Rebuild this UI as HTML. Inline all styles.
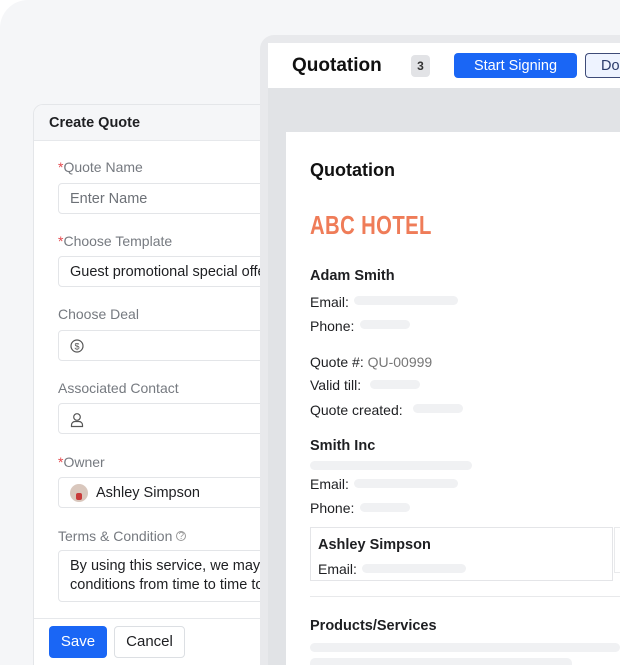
<!DOCTYPE html>
<html><head><meta charset="utf-8"><style>
*{margin:0;padding:0;box-sizing:border-box}
html,body{width:620px;height:665px;overflow:hidden;background:#fff;font-family:"Liberation Sans",sans-serif}
#w{position:relative;width:620px;height:665px;overflow:hidden}
.bg{position:absolute;left:0;top:0;width:620px;height:665px;background:#f5f6f8;border-radius:28px 0 0 0}
.a{position:absolute;white-space:nowrap}
.card{position:absolute;left:33px;top:104px;width:240px;height:561px;background:#fff;border:1px solid #e4e6e9;border-bottom:none;border-radius:10px 10px 0 0;overflow:hidden}
.card .hd{height:36px;background:#f5f6f8;border-bottom:1px solid #e6e8eb}
.lbl{position:absolute;left:24px;font-size:14px;color:#767a80}
.lbl i{color:#e5484d;font-style:normal}
.inp{position:absolute;left:24px;width:240px;height:31px;border:1px solid #e3e5e8;border-radius:4px;font-size:14.5px;color:#1e1f22;padding:7px 11px;white-space:nowrap;overflow:hidden}
.frame{position:absolute;left:260px;top:35px;width:360px;height:630px;background:#e8e9ec;border-radius:14px 0 0 0}
.gray{position:absolute;left:268px;top:43px;width:352px;height:622px;background:#e1e3e6}
.head{position:absolute;left:268px;top:43px;width:352px;height:45px;background:#fff}
.paper{position:absolute;left:286px;top:132px;width:334px;height:533px;background:#fff}
.t{position:absolute;left:310px;font-size:14px;color:#1e1f22;white-space:nowrap}
.bar{position:absolute;height:9px;background:#f0f1f3;border-radius:5px}
</style></head><body><div id="w">
<div class="bg"></div>
<div class="card"><div class="hd"></div>
<div class="a" style="left:15px;top:10px;font-size:14.5px;font-weight:bold;color:#1e1f22">Create Quote</div>
<div class="lbl" style="top:54px"><i>*</i>Quote Name</div>
<div class="inp" style="top:78px;color:#6d7177">Enter Name</div>
<div class="lbl" style="top:128px"><i>*</i>Choose Template</div>
<div class="inp" style="top:151px">Guest promotional special offer</div>
<div class="lbl" style="top:201px">Choose Deal</div>
<div class="inp" style="top:225px"><svg width="14" height="14" viewBox="0 0 14 14" style="margin-top:1px"><circle cx="7" cy="7" r="6" fill="none" stroke="#555" stroke-width="1.2"/><text x="7" y="10.5" font-size="9" text-anchor="middle" fill="#555" font-family="Liberation Sans">$</text></svg></div>
<div class="lbl" style="top:275px">Associated Contact</div>
<div class="inp" style="top:298px"><svg width="14" height="16" viewBox="0 0 14 16" style="margin-top:1px"><circle cx="7" cy="5" r="3.3" fill="none" stroke="#555" stroke-width="1.2"/><path d="M1.5 14.5v-1.5a3.5 3.5 0 0 1 3.5-3.5h4a3.5 3.5 0 0 1 3.5 3.5v1.5z" fill="none" stroke="#555" stroke-width="1.2"/></svg></div>
<div class="lbl" style="top:349px"><i>*</i>Owner</div>
<div class="inp" style="top:372px;padding-left:37px">Ashley Simpson<span style="position:absolute;left:11px;top:6px;width:18px;height:18px;border-radius:50%;background:#d9c7bd"><span style="position:absolute;left:6px;top:9px;width:6px;height:7px;background:#c83a3a;border-radius:2px"></span></span></div>
<div class="lbl" style="top:423px">Terms &amp; Condition <span style="font-size:10px;border:1px solid #999;border-radius:50%;display:inline-block;width:10px;height:10px;line-height:9px;text-align:center;color:#999;vertical-align:2px">?</span></div>
<div class="inp" style="top:445px;height:52px;line-height:19px;padding-top:6px">By using this service, we may update<br>conditions from time to time to</div>
<div style="position:absolute;left:0;top:513px;width:100%;border-top:1px solid #e6e8eb"></div>
<div class="a" style="left:15px;top:521px;width:58px;height:32px;background:#1a66f5;border-radius:4px;color:#fff;font-size:15px;text-align:center;line-height:32px">Save</div>
<div class="a" style="left:80px;top:521px;width:71px;height:32px;border:1px solid #dcdfe3;border-radius:4px;color:#1e1f22;font-size:15px;text-align:center;line-height:30px">Cancel</div>
</div>
<div class="frame"></div>
<div class="gray"></div>
<div class="head"></div>
<div class="a" style="left:292px;top:55px;font-size:19px;font-weight:bold;color:#111">Quotation</div>
<div class="a" style="left:411px;top:55px;width:19px;height:22px;background:#e2e3e6;border-radius:4px;font-size:12px;font-weight:bold;text-align:center;line-height:22px;color:#333">3</div>
<div class="a" style="left:454px;top:53px;width:123px;height:25px;background:#1a66f5;border-radius:4px;color:#fff;font-size:14.5px;text-align:center;line-height:26px">Start Signing</div>
<div class="a" style="left:585px;top:53px;width:35px;height:25px;background:#eef3ff;border:1px solid #3e4b78;border-right:none;border-radius:4px 0 0 4px;color:#2a3a6a;font-size:14.5px;line-height:24px;padding-left:15px;overflow:hidden">Done</div>
<div class="paper"></div>
<div class="t" style="top:160px;font-size:18px;font-weight:bold;color:#111">Quotation</div>
<div class="t" style="top:210px;font-size:26px;font-weight:bold;color:#ef7c58;transform:scaleX(0.78);transform-origin:left;letter-spacing:0.5px">ABC HOTEL</div>
<div class="t" style="top:268px;font-weight:bold;font-size:14.5px">Adam Smith</div>
<div class="t" style="top:294px">Email:</div><div class="bar" style="left:354px;top:296px;width:104px"></div>
<div class="t" style="top:318px">Phone:</div><div class="bar" style="left:360px;top:320px;width:50px"></div>
<div class="t" style="top:354px">Quote #: <span style="color:#777">QU-00999</span></div>
<div class="t" style="top:377px">Valid till:</div><div class="bar" style="left:370px;top:380px;width:50px"></div>
<div class="t" style="top:402px">Quote created:</div><div class="bar" style="left:413px;top:404px;width:50px"></div>
<div class="t" style="top:438px;font-weight:bold;font-size:14.5px">Smith Inc</div>
<div class="bar" style="left:310px;top:461px;width:162px"></div>
<div class="t" style="top:476px">Email:</div><div class="bar" style="left:354px;top:479px;width:104px"></div>
<div class="t" style="top:500px">Phone:</div><div class="bar" style="left:360px;top:503px;width:50px"></div>
<div class="a" style="left:310px;top:527px;width:303px;height:54px;border:1.5px solid #e4e5e8"></div>
<div class="a" style="left:614px;top:527px;width:6px;height:46px;border:1.5px solid #e9eaec;border-right:none"></div>
<div class="t" style="left:318px;top:537px;font-weight:bold;font-size:14.5px">Ashley Simpson</div>
<div class="t" style="left:318px;top:561px">Email:</div><div class="bar" style="left:362px;top:564px;width:104px"></div>
<div class="a" style="left:310px;top:596px;width:310px;border-top:1.5px solid #e8e9eb"></div>
<div class="t" style="top:618px;font-weight:bold;font-size:14.5px">Products/Services</div>
<div class="bar" style="left:310px;top:643px;width:310px"></div>
<div class="bar" style="left:310px;top:658px;width:262px;height:7px;border-radius:5px 5px 0 0"></div>
</div></body></html>
